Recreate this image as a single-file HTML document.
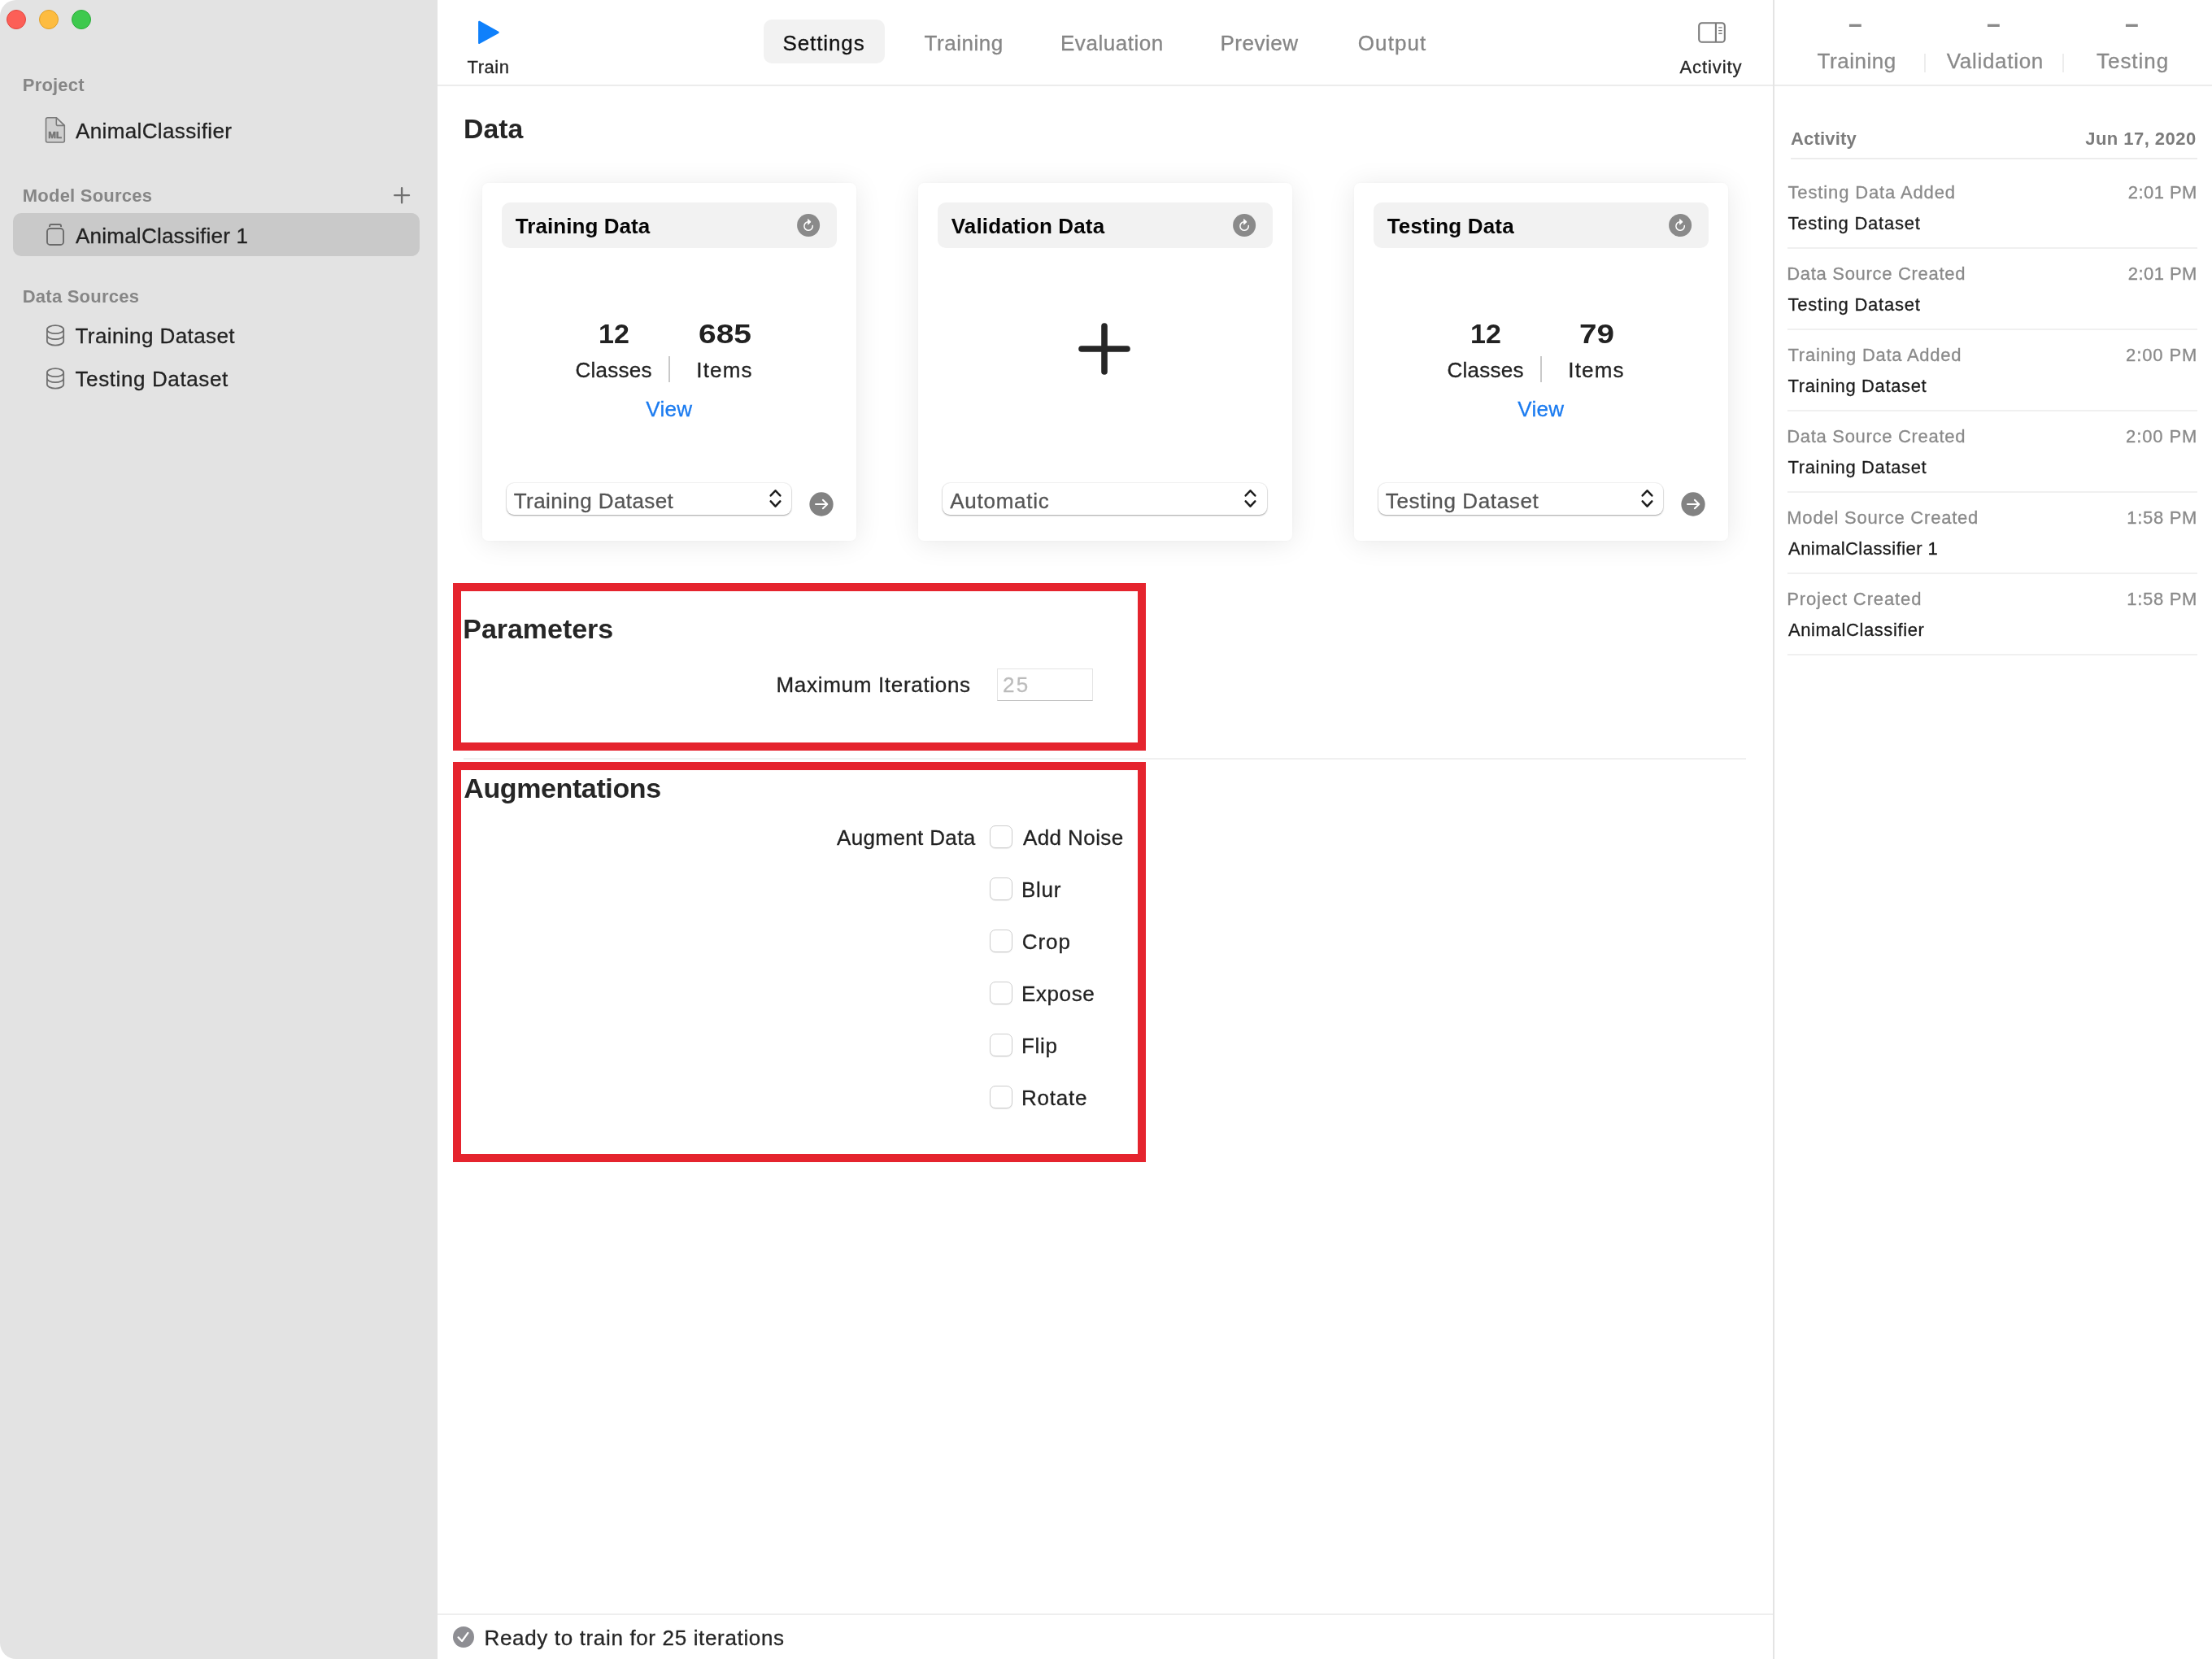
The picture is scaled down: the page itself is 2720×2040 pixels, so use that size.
<!DOCTYPE html>
<html lang="en">
<head>
<meta charset="utf-8">
<title>Create ML – AnimalClassifier</title>
<style>
*{box-sizing:border-box;margin:0;padding:0}
html,body{width:2720px;height:2040px;overflow:hidden;background:#fff}
body{font-family:"Liberation Sans",sans-serif;position:relative}
h1,h2,h3{font-weight:700}
.t{position:absolute;white-space:nowrap;display:block;-webkit-text-stroke:0.3px}
svg{position:absolute;overflow:visible}
#window{position:absolute;left:0;top:0;width:2720px;height:2040px;background:#fff;border-radius:20px 0 0 20px;overflow:hidden}
#sidebar,#main,#activity{position:absolute;top:0;height:2040px;will-change:transform}
#sidebar{left:0;width:538px;background:#e3e3e3}
#main{left:538px;width:1642px;background:#fff}
#activity{left:2180px;width:540px;background:#fff;border-left:2px solid #e4e4e4}
.light{position:absolute;width:24px;height:24px;border-radius:50%}
.sel{position:absolute;border-radius:10px;background:#c9c9c9}
.hline{position:absolute;height:2px;background:#ececec}
.vline{position:absolute;width:2px}
.pill{position:absolute;background:#f2f2f2;border-radius:10px}
.card{position:absolute;width:460px;height:440px;background:#fff;border-radius:7px;box-shadow:0 3px 34px rgba(0,0,0,.09),0 0 3px rgba(0,0,0,.03)}
.select{position:absolute;height:39.5px;border-radius:9px;background:#fff;box-shadow:0 1px 2px rgba(0,0,0,.34),0 0 0 1px rgba(0,0,0,.045)}
.field{position:absolute;background:#fff;border:1px solid #e4e4e4;border-bottom:1.5px solid #bcbcbc}
.check{position:absolute;width:28px;height:28px;border-radius:7px;background:#fff;border:1.5px solid #cdcdcd;box-shadow:0 1px 1px rgba(0,0,0,.08)}
.redbox{position:absolute;border:10px solid #e5242e}
</style>
</head>
<body>
<div id="window">

<nav id="sidebar">
<div class="traffic-lights">
<div class="light" style="left:8px;top:12px;background:#fc5f57;border:1px solid #e2463f"></div>
<div class="light" style="left:48px;top:12px;background:#fdbc40;border:1px solid #e0a028"></div>
<div class="light" style="left:88px;top:12px;background:#3ec94e;border:1px solid #2cab3a"></div>
</div>
<section class="group">
<h3 class="t" style="left:27.75px;top:93.6px;font-size:22px;line-height:22px;color:#868686;font-weight:700;-webkit-text-stroke:0;letter-spacing:0.208px;">Project</h3>
<svg style="left:54px;top:143px" width="28" height="34" viewBox="0 0 28 34"><path d="M4.5 1.75 H15.3 L25.3 11.4 V30 Q25.3 32 23.3 32 H4.5 Q2.5 32 2.5 30 V3.75 Q2.5 1.75 4.5 1.75 Z" fill="#cfcfcf" stroke="#7a7a7a" stroke-width="1.6" stroke-linejoin="round"/><path d="M15.3 1.75 V9.4 Q15.3 11.4 17.3 11.4 H25.3 Z" fill="#dadada" stroke="#7a7a7a" stroke-width="1.6" stroke-linejoin="round"/><text x="13.65" y="26.9" style="font-family:&quot;Liberation Sans&quot;,sans-serif;font-size:11.6px;font-weight:700" fill="#757575" stroke="#757575" stroke-width="0.55" text-anchor="middle">ML</text></svg>
<span class="t" style="left:93px;top:148.1px;font-size:26px;line-height:26px;color:#222;letter-spacing:0.367px;">AnimalClassifier</span>
</section>
<section class="group">
<h3 class="t" style="left:27.75px;top:229.6px;font-size:22px;line-height:22px;color:#868686;font-weight:700;-webkit-text-stroke:0;letter-spacing:0.229px;">Model Sources</h3>
<svg style="left:483.8px;top:229.6px" width="21" height="21" viewBox="0 0 21 21"><path d="M10.1 1.2 V19.2 M1.2 10.1 H19" stroke="#6f6f6f" stroke-width="2.4" stroke-linecap="round" fill="none"/></svg>
<div class="sel" style="left:16px;top:262px;width:500px;height:53px;"></div>
<svg style="left:56px;top:274px" width="24" height="29" viewBox="0 0 24 29"><path d="M5.05 5 V4 Q5.05 2 7.05 2 H17.05 Q19.05 2 19.05 4 V5" fill="none" stroke="#6a6a6a" stroke-width="1.9"/><rect x="2" y="7" width="20" height="20" rx="3.6" ry="3.6" fill="none" stroke="#6a6a6a" stroke-width="1.9"/></svg>
<span class="t" style="left:93px;top:277.1px;font-size:26px;line-height:26px;color:#222;letter-spacing:0.235px;">AnimalClassifier 1</span>
</section>
<section class="group">
<h3 class="t" style="left:27.75px;top:353.6px;font-size:22px;line-height:22px;color:#868686;font-weight:700;-webkit-text-stroke:0;letter-spacing:0.227px;">Data Sources</h3>
<svg style="left:56px;top:398.5px" width="25" height="28" viewBox="0 0 25 28"><ellipse cx="12.05" cy="6.2" rx="10.15" ry="5" fill="none" stroke="#707070" stroke-width="1.8"/><path d="M1.9 6.2 V20.6 A10.15 5 0 0 0 22.2 20.6 V6.2" fill="none" stroke="#707070" stroke-width="1.8"/><path d="M1.9 13.2 A10.15 5 0 0 0 22.2 13.2" fill="none" stroke="#707070" stroke-width="1.8"/></svg>
<span class="t" style="left:92.5px;top:400.1px;font-size:26px;line-height:26px;color:#222;letter-spacing:0.417px;">Training Dataset</span>
<svg style="left:56px;top:451.5px" width="25" height="28" viewBox="0 0 25 28"><ellipse cx="12.05" cy="6.2" rx="10.15" ry="5" fill="none" stroke="#707070" stroke-width="1.8"/><path d="M1.9 6.2 V20.6 A10.15 5 0 0 0 22.2 20.6 V6.2" fill="none" stroke="#707070" stroke-width="1.8"/><path d="M1.9 13.2 A10.15 5 0 0 0 22.2 13.2" fill="none" stroke="#707070" stroke-width="1.8"/></svg>
<span class="t" style="left:92.5px;top:453.1px;font-size:26px;line-height:26px;color:#222;letter-spacing:0.607px;">Testing Dataset</span>
</section>
</nav>
<main id="main">
<header id="toolbar">
<svg style="left:48px;top:24px" width="30" height="32" viewBox="0 0 30 32"><path d="M3.3 2.9 L26.5 15.85 L3.3 28.8 Z" fill="#0f80fb" stroke="#0f80fb" stroke-width="2.4" stroke-linejoin="round"/></svg>
<span class="t" style="left:36.5px;top:71.6px;font-size:22px;line-height:22px;color:#262626;letter-spacing:0.562px;">Train</span>
<div class="tabs">
<div class="pill" style="left:401px;top:24px;width:149px;height:54px;"></div>
<span class="t" style="left:424.5px;top:40.1px;font-size:26px;line-height:26px;color:#111;letter-spacing:0.893px;">Settings</span>
<span class="t" style="left:598.5px;top:40.1px;font-size:26px;line-height:26px;color:#868686;letter-spacing:0.536px;">Training</span>
<span class="t" style="left:766px;top:40.1px;font-size:26px;line-height:26px;color:#868686;letter-spacing:0.528px;">Evaluation</span>
<span class="t" style="left:962.5px;top:40.1px;font-size:26px;line-height:26px;color:#868686;letter-spacing:0.500px;">Preview</span>
<span class="t" style="left:1131.75px;top:40.1px;font-size:26px;line-height:26px;color:#868686;letter-spacing:1.100px;">Output</span>
</div>
<svg style="left:1549px;top:26px" width="36" height="28" viewBox="0 0 36 28"><rect x="2.2" y="2.2" width="31.6" height="23.6" rx="3.6" fill="none" stroke="#7b7b7b" stroke-width="2.1"/><path d="M22.9 2.2 V25.8" stroke="#7b7b7b" stroke-width="2.1" fill="none"/><path d="M26.2 7.9 H30.6 M26.2 11.6 H30.6 M26.2 15.3 H30.6" stroke="#7b7b7b" stroke-width="1.4" fill="none"/></svg>
<span class="t" style="left:1527.5px;top:71.6px;font-size:22px;line-height:22px;color:#262626;letter-spacing:0.893px;">Activity</span>
<div class="hline" style="left:0px;top:103.5px;width:1642px;"></div>
</header>
<section id="data">
<h1 class="t" style="left:31.52px;top:141.1px;font-size:34px;line-height:34px;color:#262626;font-weight:700;-webkit-text-stroke:0;transform:scaleX(0.9930);transform-origin:0 0;">Data</h1>
<section class="card" style="left:55px;top:225px;">
<div class="pill" style="left:24px;top:24px;width:412px;height:55.5px;"></div>
<h2 class="t" style="left:40.75px;top:40.1px;font-size:26px;line-height:26px;color:#050505;font-weight:700;-webkit-text-stroke:0;letter-spacing:0.062px;">Training Data</h2>
<svg style="left:387px;top:37.5px" width="28" height="28" viewBox="0 0 28 28"><circle cx="14.1" cy="14" r="14" fill="#8a8a8a"/><path d="M19.28 14.55 A5.2 5.2 0 1 1 14.1 9.8" fill="none" stroke="#fff" stroke-width="1.5" stroke-linecap="round"/><path d="M13.6 6.5 L17.1 9.75 L13.6 13 Z" fill="#fff" stroke="#fff" stroke-width="0.9" stroke-linejoin="round"/></svg>
<div class="stats">
<span class="t" style="left:143px;top:168.1px;font-size:34px;line-height:34px;color:#222;font-weight:700;-webkit-text-stroke:0;">12</span>
<span class="t" style="left:265.57px;top:168.1px;font-size:34px;line-height:34px;color:#222;font-weight:700;-webkit-text-stroke:0;transform:scaleX(1.1468);transform-origin:0 0;">685</span>
<span class="t" style="left:114.5px;top:217.1px;font-size:26px;line-height:26px;color:#222;letter-spacing:0.250px;">Classes</span>
<div class="vline" style="left:229px;top:213px;height:32px;background:#c9c9c9"></div>
<span class="t" style="left:263.25px;top:217.1px;font-size:26px;line-height:26px;color:#222;letter-spacing:1.188px;">Items</span>
<span class="t" style="left:201.25px;top:265.1px;font-size:26px;line-height:26px;color:#1b7bf0;letter-spacing:0.333px;">View</span>
</div>
<div class="select" style="left:29.5px;top:368.5px;width:350.5px;"></div>
<span class="t" style="left:38.75px;top:378.1px;font-size:26px;line-height:26px;color:#555;letter-spacing:0.417px;">Training Dataset</span>
<svg style="left:350.75px;top:375px" width="19" height="27" viewBox="0 0 19 27"><path d="M3.7 9.45 L9.5 3.25 L15.3 9.45 M3.7 16.45 L9.5 22.65 L15.3 16.45" fill="none" stroke="#1e1e1e" stroke-width="2.55" stroke-linecap="round" stroke-linejoin="round"/></svg>
<svg style="left:402.05px;top:379.55px" width="30" height="30" viewBox="0 0 30 30"><circle cx="15" cy="15" r="14.65" fill="#828282"/><path d="M8 15 H22.2 M16.9 9.7 L22.3 15 L16.9 20.3" fill="none" stroke="#fff" stroke-width="2" stroke-linecap="round" stroke-linejoin="round"/></svg>
</section>
<section class="card" style="left:591px;top:225px;">
<div class="pill" style="left:24px;top:24px;width:412px;height:55.5px;"></div>
<h2 class="t" style="left:40.75px;top:40.1px;font-size:26px;line-height:26px;color:#050505;font-weight:700;-webkit-text-stroke:0;letter-spacing:0.143px;">Validation Data</h2>
<svg style="left:387px;top:37.5px" width="28" height="28" viewBox="0 0 28 28"><circle cx="14.1" cy="14" r="14" fill="#8a8a8a"/><path d="M19.28 14.55 A5.2 5.2 0 1 1 14.1 9.8" fill="none" stroke="#fff" stroke-width="1.5" stroke-linecap="round"/><path d="M13.6 6.5 L17.1 9.75 L13.6 13 Z" fill="#fff" stroke="#fff" stroke-width="0.9" stroke-linejoin="round"/></svg>
<svg style="left:197px;top:172px" width="64" height="64" viewBox="0 0 64 64"><path d="M32 4 V60 M4 32 H60" stroke="#262626" stroke-width="7.6" stroke-linecap="round" fill="none"/></svg>
<div class="select" style="left:29.5px;top:368.5px;width:399px;"></div>
<span class="t" style="left:39.25px;top:378.1px;font-size:26px;line-height:26px;color:#555;letter-spacing:0.725px;">Automatic</span>
<svg style="left:399.25px;top:375px" width="19" height="27" viewBox="0 0 19 27"><path d="M3.7 9.45 L9.5 3.25 L15.3 9.45 M3.7 16.45 L9.5 22.65 L15.3 16.45" fill="none" stroke="#1e1e1e" stroke-width="2.55" stroke-linecap="round" stroke-linejoin="round"/></svg>
</section>
<section class="card" style="left:1127px;top:225px;">
<div class="pill" style="left:24px;top:24px;width:412px;height:55.5px;"></div>
<h2 class="t" style="left:40.75px;top:40.1px;font-size:26px;line-height:26px;color:#050505;font-weight:700;-webkit-text-stroke:0;letter-spacing:0.159px;">Testing Data</h2>
<svg style="left:387px;top:37.5px" width="28" height="28" viewBox="0 0 28 28"><circle cx="14.1" cy="14" r="14" fill="#8a8a8a"/><path d="M19.28 14.55 A5.2 5.2 0 1 1 14.1 9.8" fill="none" stroke="#fff" stroke-width="1.5" stroke-linecap="round"/><path d="M13.6 6.5 L17.1 9.75 L13.6 13 Z" fill="#fff" stroke="#fff" stroke-width="0.9" stroke-linejoin="round"/></svg>
<div class="stats">
<span class="t" style="left:143px;top:168.1px;font-size:34px;line-height:34px;color:#222;font-weight:700;-webkit-text-stroke:0;">12</span>
<span class="t" style="left:276.55px;top:168.1px;font-size:34px;line-height:34px;color:#222;font-weight:700;-webkit-text-stroke:0;transform:scaleX(1.1348);transform-origin:0 0;">79</span>
<span class="t" style="left:114.5px;top:217.1px;font-size:26px;line-height:26px;color:#222;letter-spacing:0.250px;">Classes</span>
<div class="vline" style="left:229px;top:213px;height:32px;background:#c9c9c9"></div>
<span class="t" style="left:263.25px;top:217.1px;font-size:26px;line-height:26px;color:#222;letter-spacing:1.188px;">Items</span>
<span class="t" style="left:201.25px;top:265.1px;font-size:26px;line-height:26px;color:#1b7bf0;letter-spacing:0.333px;">View</span>
</div>
<div class="select" style="left:29.5px;top:368.5px;width:350.5px;"></div>
<span class="t" style="left:38.75px;top:378.1px;font-size:26px;line-height:26px;color:#555;letter-spacing:0.625px;">Testing Dataset</span>
<svg style="left:350.75px;top:375px" width="19" height="27" viewBox="0 0 19 27"><path d="M3.7 9.45 L9.5 3.25 L15.3 9.45 M3.7 16.45 L9.5 22.65 L15.3 16.45" fill="none" stroke="#1e1e1e" stroke-width="2.55" stroke-linecap="round" stroke-linejoin="round"/></svg>
<svg style="left:402.05px;top:379.55px" width="30" height="30" viewBox="0 0 30 30"><circle cx="15" cy="15" r="14.65" fill="#828282"/><path d="M8 15 H22.2 M16.9 9.7 L22.3 15 L16.9 20.3" fill="none" stroke="#fff" stroke-width="2" stroke-linecap="round" stroke-linejoin="round"/></svg>
</section>
</section>
<section id="parameters">
<h1 class="t" style="left:31.25px;top:756.1px;font-size:34px;line-height:34px;color:#262626;font-weight:700;-webkit-text-stroke:0;letter-spacing:-0.033px;">Parameters</h1>
<span class="t" style="left:416.5px;top:829.1px;font-size:26px;line-height:26px;color:#222;letter-spacing:0.691px;">Maximum Iterations</span>
<div class="field" style="left:688.25px;top:822px;width:117.5px;height:40px;"></div>
<span class="t" style="left:695px;top:829.1px;font-size:26px;line-height:26px;color:#bcbcbc;letter-spacing:2.250px;">25</span>
</section>
<div class="hline" style="left:32px;top:931.5px;width:1577px;background:#f0f0f0"></div>
<section id="augmentations">
<h1 class="t" style="left:32.25px;top:952.1px;font-size:34px;line-height:34px;color:#262626;font-weight:700;-webkit-text-stroke:0;letter-spacing:-0.387px;">Augmentations</h1>
<span class="t" style="left:491px;top:1017.1px;font-size:26px;line-height:26px;color:#222;letter-spacing:0.364px;">Augment Data</span>
<div class="option">
<div class="check" style="left:679px;top:1015px;"></div>
<span class="t" style="left:720px;top:1017.1px;font-size:26px;line-height:26px;color:#222;letter-spacing:0.406px;">Add Noise</span>
</div>
<div class="option">
<div class="check" style="left:679px;top:1079px;"></div>
<span class="t" style="left:718px;top:1081.1px;font-size:26px;line-height:26px;color:#222;letter-spacing:0.750px;">Blur</span>
</div>
<div class="option">
<div class="check" style="left:679px;top:1143px;"></div>
<span class="t" style="left:718.75px;top:1145.1px;font-size:26px;line-height:26px;color:#222;letter-spacing:0.917px;">Crop</span>
</div>
<div class="option">
<div class="check" style="left:679px;top:1207px;"></div>
<span class="t" style="left:718px;top:1209.1px;font-size:26px;line-height:26px;color:#222;letter-spacing:0.600px;">Expose</span>
</div>
<div class="option">
<div class="check" style="left:679px;top:1271px;"></div>
<span class="t" style="left:718px;top:1273.1px;font-size:26px;line-height:26px;color:#222;letter-spacing:0.667px;">Flip</span>
</div>
<div class="option">
<div class="check" style="left:679px;top:1335px;"></div>
<span class="t" style="left:718px;top:1337.1px;font-size:26px;line-height:26px;color:#222;letter-spacing:0.760px;">Rotate</span>
</div>
</section>
<div class="redbox" style="left:19px;top:717px;width:852px;height:205.5px;"></div>
<div class="redbox" style="left:19px;top:937px;width:852px;height:491.5px;"></div>
<footer id="status">
<div class="hline" style="left:0px;top:1984px;width:1642px;background:#eeeeee"></div>
<svg style="left:19px;top:2000px" width="26" height="26" viewBox="0 0 26 26"><circle cx="13" cy="13" r="13" fill="#8e8e93"/><path d="M6.6 13.4 L11.1 18 L18.4 7.9" fill="none" stroke="#fff" stroke-width="2.3" stroke-linecap="round" stroke-linejoin="round"/></svg>
<span class="t" style="left:57.5px;top:2001.1px;font-size:26px;line-height:26px;color:#262626;letter-spacing:0.653px;">Ready to train for 25 iterations</span>
</footer>
</main>
<aside id="activity">
<header class="metrics">
<div class="metric">
<span class="t" style="left:91.12px;top:11.1px;font-size:34px;line-height:34px;color:#8a8a8a;font-weight:700;-webkit-text-stroke:0;transform:scaleX(0.8824);transform-origin:0 0;">–</span>
<span class="t" style="left:52.5px;top:62.1px;font-size:26px;line-height:26px;color:#8a8a8a;letter-spacing:0.536px;">Training</span>
</div>
<div class="metric">
<span class="t" style="left:261.12px;top:11.1px;font-size:34px;line-height:34px;color:#8a8a8a;font-weight:700;-webkit-text-stroke:0;transform:scaleX(0.8824);transform-origin:0 0;">–</span>
<span class="t" style="left:211.75px;top:62.1px;font-size:26px;line-height:26px;color:#8a8a8a;letter-spacing:0.694px;">Validation</span>
</div>
<div class="metric">
<span class="t" style="left:431.12px;top:11.1px;font-size:34px;line-height:34px;color:#8a8a8a;font-weight:700;-webkit-text-stroke:0;transform:scaleX(0.8824);transform-origin:0 0;">–</span>
<span class="t" style="left:396px;top:62.1px;font-size:26px;line-height:26px;color:#8a8a8a;letter-spacing:0.958px;">Testing</span>
</div>
<div class="vline" style="left:184px;top:66px;height:23px;background:#ededed"></div>
<div class="vline" style="left:354px;top:66px;height:23px;background:#ededed"></div>
<div class="hline" style="left:0px;top:103.5px;width:538px;"></div>
</header>
<section class="log">
<h3 class="t" style="left:20px;top:159.6px;font-size:22px;line-height:22px;color:#7c7c7c;font-weight:700;-webkit-text-stroke:0;letter-spacing:0.179px;">Activity</h3>
<h3 class="t" style="left:382.25px;top:159.6px;font-size:22px;line-height:22px;color:#7c7c7c;font-weight:700;-webkit-text-stroke:0;letter-spacing:0.455px;">Jun 17, 2020</h3>
<div class="hline" style="left:20px;top:193.5px;width:499.5px;"></div>
<div class="row">
<span class="t" style="left:16.5px;top:225.6px;font-size:22px;line-height:22px;color:#8a8a8a;letter-spacing:0.868px;">Testing Data Added</span>
<span class="t" style="left:434.75px;top:225.6px;font-size:22px;line-height:22px;color:#8a8a8a;letter-spacing:0.458px;">2:01 PM</span>
<span class="t" style="left:16.5px;top:263.6px;font-size:22px;line-height:22px;color:#1c1c1c;letter-spacing:0.768px;">Testing Dataset</span>
<div class="hline" style="left:16px;top:304px;width:503.5px;background:#f0f0f0"></div>
</div>
<div class="row">
<span class="t" style="left:15.25px;top:325.6px;font-size:22px;line-height:22px;color:#8a8a8a;letter-spacing:0.694px;">Data Source Created</span>
<span class="t" style="left:434.75px;top:325.6px;font-size:22px;line-height:22px;color:#8a8a8a;letter-spacing:0.458px;">2:01 PM</span>
<span class="t" style="left:16.5px;top:363.6px;font-size:22px;line-height:22px;color:#1c1c1c;letter-spacing:0.768px;">Testing Dataset</span>
<div class="hline" style="left:16px;top:404px;width:503.5px;background:#f0f0f0"></div>
</div>
<div class="row">
<span class="t" style="left:16.5px;top:425.6px;font-size:22px;line-height:22px;color:#8a8a8a;letter-spacing:0.736px;">Training Data Added</span>
<span class="t" style="left:432px;top:425.6px;font-size:22px;line-height:22px;color:#8a8a8a;letter-spacing:0.917px;">2:00 PM</span>
<span class="t" style="left:16.5px;top:463.6px;font-size:22px;line-height:22px;color:#1c1c1c;letter-spacing:0.640px;">Training Dataset</span>
<div class="hline" style="left:16px;top:504px;width:503.5px;background:#f0f0f0"></div>
</div>
<div class="row">
<span class="t" style="left:15.25px;top:525.6px;font-size:22px;line-height:22px;color:#8a8a8a;letter-spacing:0.694px;">Data Source Created</span>
<span class="t" style="left:432px;top:525.6px;font-size:22px;line-height:22px;color:#8a8a8a;letter-spacing:0.917px;">2:00 PM</span>
<span class="t" style="left:16.5px;top:563.6px;font-size:22px;line-height:22px;color:#1c1c1c;letter-spacing:0.640px;">Training Dataset</span>
<div class="hline" style="left:16px;top:604px;width:503.5px;background:#f0f0f0"></div>
</div>
<div class="row">
<span class="t" style="left:15.25px;top:625.6px;font-size:22px;line-height:22px;color:#8a8a8a;letter-spacing:0.789px;">Model Source Created</span>
<span class="t" style="left:433.25px;top:625.6px;font-size:22px;line-height:22px;color:#8a8a8a;letter-spacing:0.708px;">1:58 PM</span>
<span class="t" style="left:17px;top:663.6px;font-size:22px;line-height:22px;color:#1c1c1c;letter-spacing:0.459px;">AnimalClassifier 1</span>
<div class="hline" style="left:16px;top:704px;width:503.5px;background:#f0f0f0"></div>
</div>
<div class="row">
<span class="t" style="left:15.25px;top:725.6px;font-size:22px;line-height:22px;color:#8a8a8a;letter-spacing:0.879px;">Project Created</span>
<span class="t" style="left:433.25px;top:725.6px;font-size:22px;line-height:22px;color:#8a8a8a;letter-spacing:0.708px;">1:58 PM</span>
<span class="t" style="left:17px;top:763.6px;font-size:22px;line-height:22px;color:#1c1c1c;letter-spacing:0.607px;">AnimalClassifier</span>
<div class="hline" style="left:16px;top:804px;width:503.5px;background:#f0f0f0"></div>
</div>
</section>
</aside>
</div>
</body>
</html>
